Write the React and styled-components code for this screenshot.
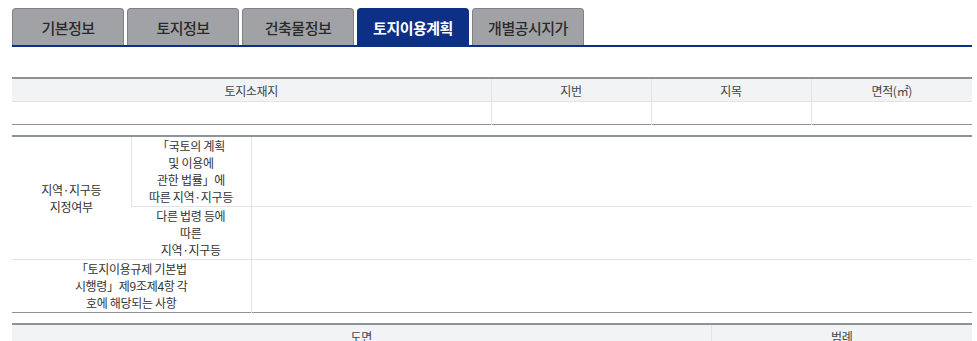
import React from "react";
import styled, { createGlobalStyle } from "styled-components";

const GlobalStyle = createGlobalStyle`
  body {
    margin: 0;
    background: #fff;
    font-family: "Noto Sans CJK KR", "Noto Sans", sans-serif;
    color: #333;
  }
`;

const Page = styled.div`
  width: 960px;
  padding: 8px 0 0 12px;
`;

const Tabs = styled.ul`
  display: flex;
  gap: 3px;
  margin: 0;
  padding: 0;
  list-style: none;
  border-bottom: 2px solid #0d2f86;
`;

const Tab = styled.li`
  width: 112px;
  height: 37px;
  box-sizing: border-box;
  display: flex;
  align-items: center;
  justify-content: center;
  border: 1px solid ${({ $active }) => ($active ? "#0d2f86" : "#7e8186")};
  border-bottom: none;
  border-radius: 4px 4px 0 0;
  background: ${({ $active }) => ($active ? "#0d2f86" : "#a0a2a6")};
  color: ${({ $active }) => ($active ? "#fff" : "#2a2a2a")};
  font-size: 15px;
  font-weight: ${({ $active }) => ($active ? 700 : 500)};
  letter-spacing: -0.5px;
`;

const Table = styled.table`
  width: 960px;
  border-collapse: collapse;
  table-layout: fixed;
  border-top: 2px solid #8e939b;
  border-bottom: 1px solid #8e939b;
  margin-top: ${({ $gap }) => $gap}px;
  font-size: 12px;
  line-height: 17px;
  letter-spacing: -0.3px;
`;

const Th = styled.th`
  background: #f2f3f5;
  color: #444;
  font-weight: 400;
  padding: 3px 5px 2px;
  border-bottom: 1px solid #e3e3e3;
  border-left: 1px solid #e3e3e3;
  &:first-child {
    border-left: none;
  }
`;

const Td = styled.td`
  height: ${({ $h }) => ($h ? `${$h}px` : "auto")};
  padding: 0 5px;
  text-align: center;
  vertical-align: middle;
  border-top: 1px solid #e3e3e3;
  border-left: 1px solid #e3e3e3;
  box-sizing: border-box;
  &:first-child {
    border-left: none;
  }
`;

const landCols = [
  { label: "토지소재지", width: 479 },
  { label: "지번", width: 160 },
  { label: "지목", width: 160 },
  { label: "면적(㎡)", width: 161 },
];

const tabs = ["기본정보", "토지정보", "건축물정보", "토지이용계획", "개별공시지가"];

const App = () => {
  return (
    <Page>
      <GlobalStyle />
      <Tabs>
        {tabs.map((t) => (
          <Tab key={t} $active={t === "토지이용계획"}>
            {t}
          </Tab>
        ))}
      </Tabs>

      <Table $gap={30}>
        <colgroup>
          {landCols.map((c) => (
            <col key={c.label} style={{ width: c.width }} />
          ))}
        </colgroup>
        <thead>
          <tr>
            {landCols.map((c) => (
              <Th key={c.label}>{c.label}</Th>
            ))}
          </tr>
        </thead>
        <tbody>
          <tr>
            {landCols.map((c) => (
              <Td key={c.label} $h={23} />
            ))}
          </tr>
        </tbody>
      </Table>

      <Table $gap={10}>
        <colgroup>
          <col style={{ width: 119 }} />
          <col style={{ width: 120 }} />
          <col />
        </colgroup>
        <tbody>
          <tr>
            <Td rowSpan={2}>
              지역·지구등
              <br />
              지정여부
            </Td>
            <Td $h={70}>
              「국토의 계획
              <br />
              및 이용에
              <br />
              관한 법률」에
              <br />
              따른 지역·지구등
            </Td>
            <Td />
          </tr>
          <tr>
            <Td $h={53}>
              다른 법령 등에
              <br />
              따른
              <br />
              지역·지구등
            </Td>
            <Td />
          </tr>
          <tr>
            <Td colSpan={2} $h={53}>
              「토지이용규제 기본법
              <br />
              시행령」제9조제4항 각
              <br />
              호에 해당되는 사항
            </Td>
            <Td />
          </tr>
        </tbody>
      </Table>

      <Table $gap={10}>
        <colgroup>
          <col style={{ width: 699 }} />
          <col />
        </colgroup>
        <thead>
          <tr>
            <Th>도면</Th>
            <Th>범례</Th>
          </tr>
        </thead>
        <tbody>
          <tr>
            <Td $h={200} />
            <Td />
          </tr>
        </tbody>
      </Table>
    </Page>
  );
};

export default App;
